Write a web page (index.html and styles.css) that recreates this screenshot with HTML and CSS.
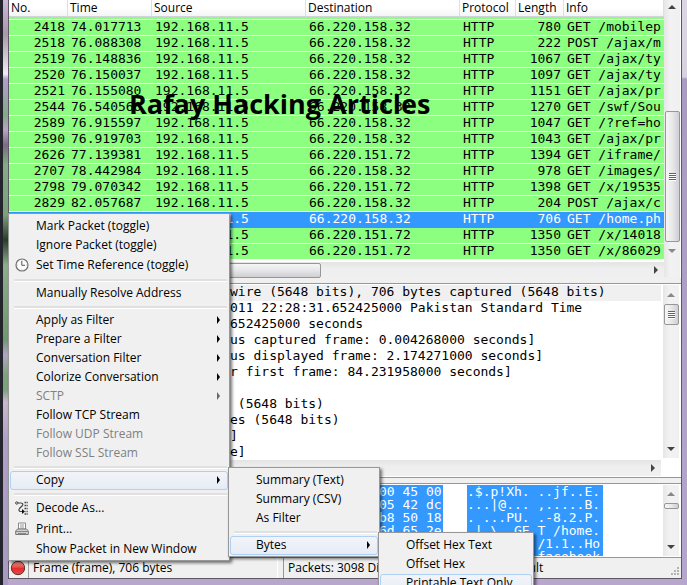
FILE: index.html
```html
<!DOCTYPE html>
<html lang="en">
<head>
    <meta charset="UTF-8">
    <meta name="viewport" content="width=device-width, initial-scale=1.0">
    <title>Packet capture</title>
    <link rel="stylesheet" href="styles.css">
</head>
<body>
    <div class="window">
        <main class="client">
            <section class="packet-pane">
                <div class="packet-list">
                    <table class="packets">
                        <colgroup>
                            <col class="col-no"><col class="col-time"><col class="col-addr"><col class="col-addr">
                            <col class="col-protocol"><col class="col-length"><col class="col-info">
                        </colgroup>
                        <thead>
                            <tr><th>No.</th><th>Time</th><th>Source</th><th>Destination</th><th>Protocol</th><th>Length</th><th>Info</th></tr>
                        </thead>
                        <tbody>
                            <tr class="cut"><td colspan="7"></td></tr>
                            <tr><td>2418</td><td>74.017713</td><td>192.168.11.5</td><td>66.220.158.32</td><td>HTTP</td><td>780</td><td>GET /mobilep</td></tr>
                            <tr><td>2518</td><td>76.088308</td><td>192.168.11.5</td><td>66.220.158.32</td><td>HTTP</td><td>222</td><td>POST /ajax/m</td></tr>
                            <tr><td>2519</td><td>76.148836</td><td>192.168.11.5</td><td>66.220.158.32</td><td>HTTP</td><td>1067</td><td>GET /ajax/ty</td></tr>
                            <tr><td>2520</td><td>76.150037</td><td>192.168.11.5</td><td>66.220.158.32</td><td>HTTP</td><td>1097</td><td>GET /ajax/ty</td></tr>
                            <tr><td>2521</td><td>76.155080</td><td>192.168.11.5</td><td>66.220.158.32</td><td>HTTP</td><td>1151</td><td>GET /ajax/pr</td></tr>
                            <tr><td>2544</td><td>76.540566</td><td>192.168.11.5</td><td>66.220.158.32</td><td>HTTP</td><td>1270</td><td>GET /swf/Sou</td></tr>
                            <tr><td>2589</td><td>76.915597</td><td>192.168.11.5</td><td>66.220.158.32</td><td>HTTP</td><td>1047</td><td>GET /?ref=ho</td></tr>
                            <tr><td>2590</td><td>76.919703</td><td>192.168.11.5</td><td>66.220.158.32</td><td>HTTP</td><td>1043</td><td>GET /ajax/pr</td></tr>
                            <tr><td>2626</td><td>77.139381</td><td>192.168.11.5</td><td>66.220.151.72</td><td>HTTP</td><td>1394</td><td>GET /iframe/</td></tr>
                            <tr><td>2707</td><td>78.442984</td><td>192.168.11.5</td><td>66.220.158.32</td><td>HTTP</td><td>978</td><td>GET /images/</td></tr>
                            <tr><td>2798</td><td>79.070342</td><td>192.168.11.5</td><td>66.220.151.72</td><td>HTTP</td><td>1398</td><td>GET /x/19535</td></tr>
                            <tr><td>2829</td><td>82.057687</td><td>192.168.11.5</td><td>66.220.158.32</td><td>HTTP</td><td>204</td><td>POST /ajax/c</td></tr>
                            <tr class="selected"><td></td><td></td><td>192.168.11.5</td><td>66.220.158.32</td><td>HTTP</td><td>706</td><td>GET /home.ph</td></tr>
                            <tr><td></td><td></td><td>192.168.11.5</td><td>66.220.151.72</td><td>HTTP</td><td>1350</td><td>GET /x/14018</td></tr>
                            <tr><td></td><td></td><td>192.168.11.5</td><td>66.220.151.72</td><td>HTTP</td><td>1350</td><td>GET /x/86029</td></tr>
                        </tbody>
                    </table>
                    <div class="hscroll">
                        <span class="thumb"></span>
                        <span class="arrow right"></span>
                    </div>
                </div>
                <div class="vscroll">
                    <span class="arrow up"></span>
                    <span class="thumb"><i class="grip"></i></span>
                    <span class="arrow down faded"></span>
                </div>
            </section>

            <section class="details-pane">
                <div class="details">
                    <ul class="tree">
                        <li class="current">wire (5648 bits), 706 bytes captured (5648 bits)</li>
                        <li>011 22:28:31.652425000 Pakistan Standard Time</li>
                        <li>652425000 seconds</li>
                        <li>us captured frame: 0.004268000 seconds]</li>
                        <li>us displayed frame: 2.174271000 seconds]</li>
                        <li>r first frame: 84.231958000 seconds]</li>
                        <li></li>
                        <li> (5648 bits)</li>
                        <li>es (5648 bits)</li>
                        <li>]</li>
                        <li>e]</li>
                    </ul>
                    <div class="hscroll">
                        <span class="arrow right"></span>
                    </div>
                </div>
                <div class="vscroll">
                    <span class="arrow up faded"></span>
                    <span class="thumb"><i class="grip"></i></span>
                    <span class="arrow down"></span>
                </div>
            </section>

            <section class="bytes-pane">
                <div class="bytes">
                    <pre class="hex">00 45 00
05 42 dc
b8 50 18
6d 65 2e
0a 48 6f
6f 6f 6b</pre>
                    <pre class="ascii">.$.p!Xh. ..jf..E.
...|@... ,.....B.
. ...PU. .-8.2.P.
.|.\..GE T /home.
php HTTP /1.1..Ho
st: www. facebook</pre>
                </div>
                <div class="vscroll">
                    <span class="arrow up faded"></span>
                    <span class="thumb"></span>
                    <span class="arrow down"></span>
                </div>
            </section>

            <footer class="statusbar">
                <span class="expert">
                    <svg width="16" height="16" viewBox="0 0 16 16">
                        <defs>
                            <linearGradient id="red" x1="0" y1="0" x2="0" y2="1">
                                <stop offset="0" stop-color="#f79a96"/>
                                <stop offset=".45" stop-color="#ea4a48"/>
                                <stop offset=".5" stop-color="#dc2c2c"/>
                                <stop offset="1" stop-color="#e84a44"/>
                            </linearGradient>
                        </defs>
                        <circle cx="8" cy="8" r="6.7" fill="url(#red)" stroke="#5e3030"/>
                    </svg>
                </span>
                <span class="field">Frame (frame), 706 bytes</span>
                <span class="packets-count">Packets: 3098 Displayed</span>
                <span class="profile">Profile: Default</span>
                <svg class="size-grip" width="10" height="10" viewBox="0 0 10 10" fill="#b4b4b4">
                    <path d="M7 0h2v2H7zM4 3h2v2H4zM7 3h2v2H7zM1 6h2v2H1zM4 6h2v2H4zM7 6h2v2H7z"/>
                </svg>
            </footer>
        </main>
    </div>

    <div class="watermark">Rafay Hacking Articles</div>

    <ul class="menu context-menu">
        <li><button>Mark Packet (toggle)</button></li>
        <li><button>Ignore Packet (toggle)</button></li>
        <li class="with-icon">
            <svg class="icon" width="14" height="14" viewBox="0 0 14 14" fill="none">
                <circle cx="7" cy="7" r="6" fill="#fafafa" stroke="#707070" stroke-width="1.2"/>
                <path d="M6.8 3v4.3h3.2" stroke="#555"/>
                <path d="M7 1.8v.8M7 11.4v.8M1.8 7h.8M11.4 7h.8" stroke="#aaa"/>
            </svg>
            <button>Set Time Reference (toggle)</button>
        </li>
        <li class="separator"></li>
        <li><button>Manually Resolve Address</button></li>
        <li class="separator"></li>
        <li class="parent"><button>Apply as Filter</button></li>
        <li class="parent"><button>Prepare a Filter</button></li>
        <li class="parent"><button>Conversation Filter</button></li>
        <li class="parent"><button>Colorize Conversation</button></li>
        <li class="parent"><button disabled>SCTP</button></li>
        <li><button>Follow TCP Stream</button></li>
        <li><button disabled>Follow UDP Stream</button></li>
        <li><button disabled>Follow SSL Stream</button></li>
        <li class="separator"></li>
        <li class="parent open">
            <button>Copy</button>
            <ul class="menu submenu">
                <li><button>Summary (Text)</button></li>
                <li><button>Summary (CSV)</button></li>
                <li><button>As Filter</button></li>
                <li class="separator"></li>
                <li class="parent open">
                    <button>Bytes</button>
                    <ul class="menu submenu">
                        <li><button>Offset Hex Text</button></li>
                        <li><button>Offset Hex</button></li>
                        <li class="open"><button>Printable Text Only</button></li>
                    </ul>
                </li>
            </ul>
        </li>
        <li class="separator"></li>
        <li class="with-icon">
            <svg class="icon" width="14" height="14" viewBox="0 0 14 14" fill="none">
                <path d="M2.500 2h3.500c2.500 0 2 2 1 3L4.500 7.500c-1 1.500-.5 3 1 3h1.500" stroke="#444" stroke-width="1.200"/>
                <circle cx="1.800" cy="2" r="1.200" fill="#eee" stroke="#444"/>
                <path d="M7 8l3 2.500L7 13z" fill="#111"/>
                <path d="M9.500 1.500h2M9.500 4.500h2M9.500 7.500h2M10.500 10.500h1M9.500 13h2" stroke="#444" stroke-width="1.600"/>
                <path d="M12.500 .8v1.500M12.500 3.800v1.500M12.500 6.800v1.500M12.500 9.800v1.500M12.500 12.300v1.500" stroke="#777"/>
            </svg>
            <button>Decode As...</button>
        </li>
        <li class="with-icon">
            <svg class="icon" width="14" height="14" viewBox="0 0 14 14">
                <path d="M3.500 1h7v6h-7z" fill="#fff" stroke="#888"/>
                <path d="M5 3h4M5 5h4" stroke="#999"/>
                <path d="M2.500 7h9l1.800 2v3.500H.7V9z" fill="#d0d0d0" stroke="#777"/>
                <path d="M1 9.500h12M3 11.500h8" stroke="#888"/>
            </svg>
            <button>Print...</button>
        </li>
        <li><button>Show Packet in New Window</button></li>
    </ul>
</body>
</html>
```

FILE: styles.css
```css
* {
    box-sizing: border-box;
}

body {
    margin: 0;
    height: 100vh;
    overflow: hidden;
    position: relative;
    background: #5a5a62;
    font-family: "Open Sans", sans-serif;
    font-size: 12px;
    color: #000;
}

ul {
    list-style: none;
    margin: 0;
    padding: 0;
}

/* Glass frame around the window */
.window {
    height: 100vh;
    padding: 0 5px 6px 5px;
    border-left: 3px solid #24242c;
    background:
        linear-gradient(#dcd6e4, #d8d2e0 77px, #a99cc0 79px, #b4a6cc 100%) right top / 5px 100% no-repeat,
        linear-gradient(#c9b8da 0, #a898a8 34px, #f0ecf4 74px, #b0a0cc 79px, #86a888 115px, #b8a4c4 130px, #7c6c84 145px, #86ac86 165px, #7ba07b 215px, #2a3c2c 240px, #8cae8c 265px, #6f9a6f 340px, #b4a4c4 355px, #7ba47b 375px, #7ba47b 390px, #ccb8d0 402px, #b0a0c8 440px, #a899c0 100%) left top / 5px 100% no-repeat,
        #b8a6cc;
}

.client {
    height: 100%;
    display: flex;
    flex-direction: column;
    border: 1px solid #5c5866;
    border-top: 0;
    background: #f0f0f0;
}

/* Packet list */
.packet-pane {
    display: flex;
    padding-right: 1px;
    background: #fff;
    border-bottom: 5px solid #f0f0f0;
}

.packet-list {
    flex: 1;
    min-width: 0;
    overflow: hidden;
}

.packets {
    width: 100%;
    table-layout: fixed;
    border-collapse: separate;
    border-spacing: 0;
}

.col-no { width: 59px; }
.col-time { width: 84px; }
.col-addr { width: 154px; }
.col-protocol { width: 56px; }
.col-length { width: 48px; }

.packets th {
    height: 17px;
    padding: 0 2px;
    font-weight: 400;
    line-height: 16px;
    text-align: left;
    background: linear-gradient(#fff 50%, #f3f4f6);
    border-right: 1px solid #dcdfe4;
    border-bottom: 1px solid #d0d3d8;
}

.packets td {
    height: 16px;
    padding: 0 3px;
    overflow: hidden;
    white-space: nowrap;
    vertical-align: top;
    font: 13px/14px "DejaVu Sans Mono", monospace;
    background: #8cff80;
    border-bottom: 1px solid #fff;
}

.packets td:nth-child(1),
.packets td:nth-child(6) {
    text-align: right;
}

.packets .cut td {
    height: 3px;
    line-height: 1px;
}

.packets .selected td {
    background: #3399ff;
    border-color: #3399ff;
    color: #fff;
}

/* Scrollbars */
.vscroll {
    display: flex;
    flex-direction: column;
    align-items: center;
    width: 16px;
    background: linear-gradient(90deg, #e6e6e6, #f2f2f2 40%, #f0f0f0);
}

.hscroll {
    display: flex;
    align-items: center;
    justify-content: space-between;
    height: 16px;
    padding-right: 6px;
    background: linear-gradient(#e4e4e4, #eee 40%, #f0f0f0);
}

.thumb {
    display: flex;
    align-items: center;
    justify-content: center;
    border: 1px solid #979797;
    border-radius: 2px;
    background: linear-gradient(90deg, #f6f6f6, #e8e8ea 50%, #cfcfd4);
}

.vscroll .thumb {
    width: 15px;
}

.hscroll .thumb {
    width: 312px;
    height: 15px;
    background: linear-gradient(#f6f6f6, #e6e6e8 50%, #cfcfd4);
}

.grip {
    width: 7px;
    height: 8px;
    background: repeating-linear-gradient(#606468 0 1px, #fff 1px 2px);
}

.arrow {
    border: 4px solid transparent;
}

.arrow.up {
    border-top: 0;
    border-bottom-color: #444;
}

.arrow.down {
    border-bottom: 0;
    border-top-color: #444;
}

.arrow.right {
    margin-left: auto;
    border-right: 0;
    border-left-color: #444;
}

.arrow.up.faded { border-bottom-color: #888; }
.arrow.down.faded { border-top-color: #888; }

.packet-pane .vscroll {
    padding: 5px 0 24px;
    border-bottom: 1px solid #f0f0f0;
}

.packet-pane .vscroll .thumb {
    height: 131px;
    margin: auto 0 7px;
}

.packet-pane .hscroll {
    margin-top: 2px;
}

/* Packet details */
.details-pane {
    flex: 1;
    min-height: 0;
    display: flex;
    padding: 1px 2px 1px 0;
    background: #fff;
    border-top: 1px solid #979797;
    border-bottom: 1px solid #979797;
}

.details {
    flex: 1;
    min-width: 0;
    display: flex;
    flex-direction: column;
    margin-right: 2px;
}

.tree {
    flex: 1;
    min-height: 0;
    overflow: hidden;
    font: 13px/14px "DejaVu Sans Mono", monospace;
}

.tree li {
    height: 16px;
    padding-left: 221px;
    white-space: pre;
}

.tree .current {
    background: #f0f0f0;
}

.details-pane .vscroll {
    padding: 8px 0 7px;
    margin-bottom: 18px;
}

.details-pane .vscroll .thumb {
    height: 21px;
    margin: 7px 0 auto;
}

/* Packet bytes */
.bytes-pane {
    flex: 0 0 75px;
    min-height: 0;
    display: flex;
    margin-top: 5px;
    padding: 1px 2px 1px 0;
    background: #fff;
    border-top: 1px solid #979797;
    border-bottom: 1px solid #979797;
}

.bytes {
    flex: 1;
    display: flex;
    gap: 24px;
    padding-left: 370px;
    overflow: hidden;
}

.bytes pre {
    margin: 0;
    height: 78px;
    font: 13px/13px "DejaVu Sans Mono", monospace;
    color: #fff;
    background: #3399ff;
}

.bytes .hex {
    width: 64px;
}

.bytes .ascii {
    width: 136px;
}

.bytes-pane .vscroll {
    padding: 7px 0 7px;
}

.bytes-pane .vscroll .thumb {
    height: 6px;
    margin: 7px 0 auto;
}

/* Status bar */
.statusbar {
    display: flex;
    height: 20px;
    line-height: 20px;
    white-space: nowrap;
}

.expert {
    display: flex;
    align-items: center;
    width: 20px;
    padding-left: 1px;
    border-right: 1px solid #a0a0a0;
}

.field {
    width: 249px;
    padding-left: 4px;
    border-right: 1px solid #fff;
}

.packets-count {
    width: 177px;
    margin-left: 5px;
    padding-left: 4px;
    border-left: 1px solid #979797;
}

.size-grip {
    margin: auto 1px 1px auto;
}

.watermark {
    position: absolute;
    top: 86px;
    left: 129px;
    font: 700 27px/36px "Open Sans", sans-serif;
    white-space: nowrap;
}

/* Menus */
.menu {
    position: absolute;
    padding: 3px 1px 1px;
    background: #f0f0f0;
    border: 1px solid #979797;
    box-shadow: 2px 2px 3px rgba(0, 0, 0, 0.55);
}

.context-menu {
    top: 213px;
    left: 8px;
    width: 222px;
}

.submenu {
    top: -4px;
    left: 100%;
    width: 152px;
    z-index: 1;
}

.submenu .submenu {
    width: 156px;
}

.menu li {
    position: relative;
    height: 19px;
}

.menu .with-icon {
    height: 21px;
}

.menu button {
    display: block;
    width: 100%;
    height: 100%;
    padding: 0 0 2px 25px;
    border: 1px solid transparent;
    border-radius: 3px;
    background: none;
    font: inherit;
    line-height: 15px;
    text-align: left;
    white-space: nowrap;
    color: #000;
}

.menu button:disabled {
    color: #808080;
}

.menu .open > button {
    border-color: #aed0f7;
    background: linear-gradient(#f2f4f8, #e6ecf6);
}

.icon {
    position: absolute;
    top: 3px;
    left: 5px;
}

.parent::before {
    content: "";
    position: absolute;
    top: 5px;
    right: 8px;
    border: 4px solid transparent;
    border-left: 3px solid #000;
    border-right: 0;
}

.parent:has(> button:disabled)::before {
    border-left-color: #666;
}

.menu .separator {
    height: 8px;
    padding: 3px 1px 0 4px;
}

.separator::before {
    content: "";
    display: block;
    height: 2px;
    background: #e0e0e0;
    border-bottom: 1px solid #fff;
}
```
